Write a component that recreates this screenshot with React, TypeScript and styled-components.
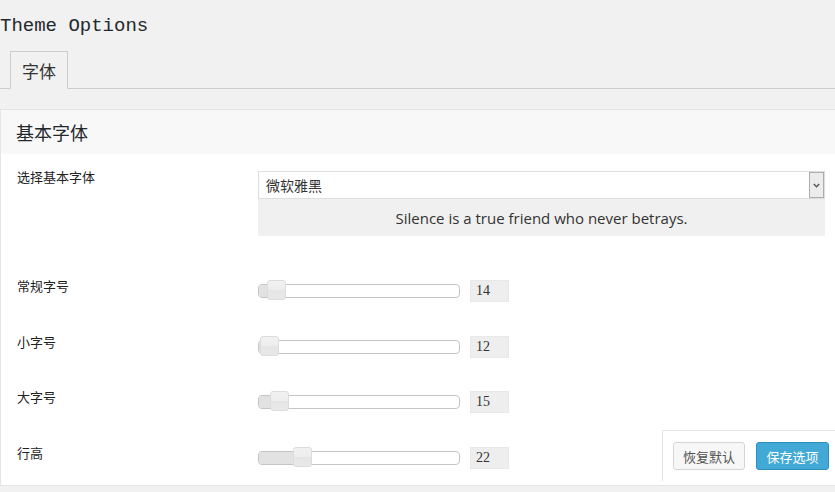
import React from 'react';
import styled, { createGlobalStyle } from 'styled-components';

const GlobalStyle = createGlobalStyle`
  html, body {
    margin: 0;
    padding: 0;
    background: #f1f1f1;
    overflow: hidden;
  }
  body {
    font-family: "Noto Sans CJK SC", "Noto Sans", sans-serif;
    color: #333;
  }
`;

const Page = styled.div`
  width: 835px;
  height: 492px;
  position: relative;
  overflow: hidden;
`;

const Title = styled.h1`
  margin: 0;
  padding: 13px 0 0 0;
  height: 38px;
  font-family: "Liberation Mono", monospace;
  font-weight: normal;
  font-size: 19px;
  line-height: 26px;
  color: #23282d;
`;

const TabBar = styled.div`
  display: flex;
  padding-left: 10px;
  border-bottom: 1px solid #ccc;
  height: 37px;
`;

const Tab = styled.div<{ $active?: boolean }>`
  box-sizing: border-box;
  height: 38px;
  padding: 0 11px;
  display: flex;
  align-items: center;
  border: 1px solid #ccc;
  border-bottom-color: ${p => (p.$active ? '#f1f1f1' : '#ccc')};
  background: #f1f1f1;
  font-size: 17px;
  color: #333;
`;

const Panel = styled.div`
  margin-top: 20px;
  margin-right: -2px;
  border: 1px solid #e5e5e5;
  background: #fff;
`;

const PanelHeader = styled.div`
  height: 44px;
  padding-left: 15px;
  display: flex;
  align-items: center;
  background: #f8f8f8;
  font-size: 18px;
  color: #23282d;
`;

const PanelBody = styled.div`
  padding: 17px 11px 16px 16px;
`;

const Row = styled.div<{ $gap?: number }>`
  display: flex;
  align-items: flex-start;
  margin-top: ${p => p.$gap ?? 0}px;
`;

const Label = styled.div`
  width: 241px;
  flex-shrink: 0;
  font-size: 13px;
  line-height: 13px;
  color: #222;
  margin-top: -1px;
`;

const Control = styled.div`
  flex: 1;
  display: flex;
  flex-direction: column;
`;

const Select = styled.div`
  box-sizing: border-box;
  height: 28px;
  border: 1px solid #ddd;
  background: #fff;
  display: flex;
  align-items: center;
  justify-content: space-between;
  font-size: 14px;
  color: #333;
  padding-left: 7px;
`;

const SelectArrow = styled.div`
  box-sizing: border-box;
  width: 15px;
  height: 26px;
  background: #ececec;
  border: 1px solid #adadad;
  display: flex;
  align-items: center;
  justify-content: center;
`;

const Preview = styled.div`
  height: 37px;
  background: #f0f0f0;
  display: flex;
  align-items: center;
  justify-content: center;
  font-family: "Open Sans", "Noto Sans", sans-serif;
  font-size: 15px;
  color: #333;
`;

const SliderWrap = styled.div`
  display: flex;
  align-items: center;
  height: 22px;
`;

const Track = styled.div`
  box-sizing: border-box;
  position: relative;
  width: 202px;
  height: 14px;
  border: 1px solid #c4c4c4;
  border-radius: 4px;
  background: #fff;
`;

const Range = styled.div`
  position: absolute;
  left: 0;
  top: 0;
  bottom: 0;
  background: #e2e2e2;
  border-radius: 3px 0 0 3px;
`;

const Handle = styled.div`
  box-sizing: border-box;
  position: absolute;
  top: -5px;
  width: 19px;
  height: 20px;
  border: 1px solid #dcdcdc;
  border-radius: 3px;
  background: linear-gradient(#f1f1f1 0%, #ededed 50%, #e5e5e5 51%, #e8e8e8 100%);
`;

const Value = styled.div`
  box-sizing: border-box;
  margin-left: 10px;
  width: 39px;
  height: 22px;
  background: #eee;
  border: 1px solid #e8e8e8;
  padding-left: 5px;
  display: flex;
  align-items: center;
  font-family: "Liberation Serif", serif;
  font-size: 14px;
  color: #333;
`;

const SubmitBar = styled.div`
  box-sizing: border-box;
  position: absolute;
  right: -2px;
  top: 430px;
  width: 175px;
  height: 51px;
  background: #fff;
  border-left: 1px solid #e5e5e5;
  border-top: 1px solid #e5e5e5;
  display: flex;
  align-items: flex-start;
  gap: 11px;
  padding: 11px 0 0 10px;
`;

const Button = styled.button<{ $primary?: boolean }>`
  box-sizing: border-box;
  height: 28px;
  padding: 0;
  white-space: nowrap;
  border-radius: 3px;
  border: 1px solid ${p => (p.$primary ? '#2b8fbe' : '#d4d4d4')};
  background: ${p => (p.$primary ? '#42a9d6' : '#f7f7f7')};
  color: ${p => (p.$primary ? '#fff' : '#555')};
  font-family: "Noto Sans CJK SC", sans-serif;
  font-size: 13px;
  width: ${p => (p.$primary ? 73 : 72)}px;
`;

const sliders = [
  { label: '常规字号', value: 14 },
  { label: '小字号', value: 12 },
  { label: '大字号', value: 15 },
  { label: '行高', value: 22 },
];

function Slider({ value }: { value: number }) {
  const left = 2 + (value - 12) * 3.3;
  return (
    <SliderWrap>
      <Track>
        <Range style={{ width: left + 10 }} />
        <Handle style={{ left: left - 1 }} />
      </Track>
      <Value>{value}</Value>
    </SliderWrap>
  );
}

export default function App() {
  return (
    <Page>
      <GlobalStyle />
      <Title>Theme Options</Title>
      <TabBar>
        <Tab $active>字体</Tab>
      </TabBar>
      <Panel>
        <PanelHeader>基本字体</PanelHeader>
        <PanelBody>
          <Row>
            <Label>选择基本字体</Label>
            <Control>
              <Select>
                微软雅黑
                <SelectArrow>
                  <svg width="7" height="5" viewBox="0 0 7 5">
                    <path d="M0.8 1 L3.5 3.8 L6.2 1" fill="none" stroke="#555" strokeWidth="1.4" />
                  </svg>
                </SelectArrow>
              </Select>
              <Preview>Silence is a true friend who never betrays.</Preview>
            </Control>
          </Row>
          {sliders.map((s, i) => (
            <Row key={s.label} $gap={i === 0 ? 44 : 33.6}>
              <Label>{s.label}</Label>
              <Slider value={s.value} />
            </Row>
          ))}
        </PanelBody>
      </Panel>
      <SubmitBar>
        <Button>恢复默认</Button>
        <Button $primary>保存选项</Button>
      </SubmitBar>
    </Page>
  );
}
